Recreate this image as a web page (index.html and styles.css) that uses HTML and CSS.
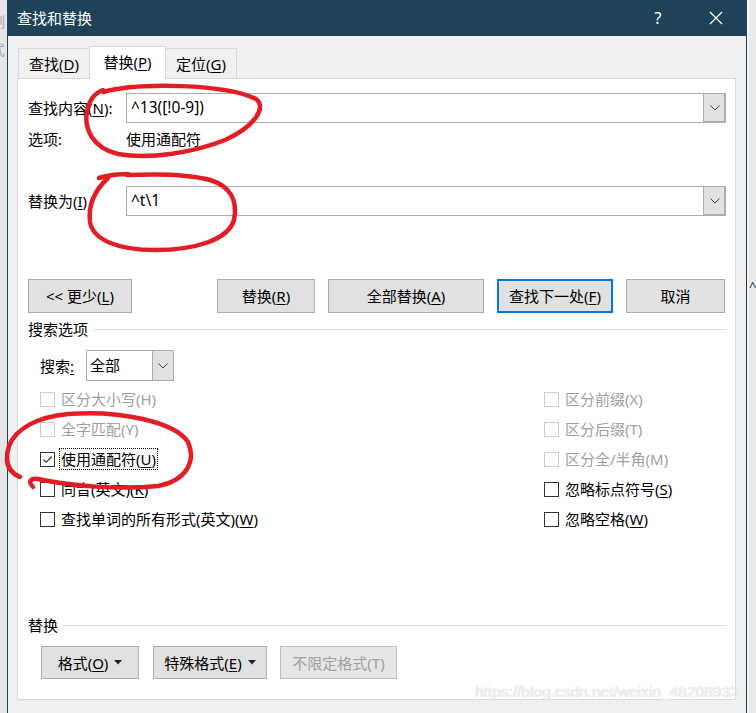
FILE: index.html
```html
<!DOCTYPE html>
<html lang="zh-CN">
<head>
<meta charset="utf-8">
<title>查找和替换</title>
<link rel="stylesheet" href="styles.css">
</head>
<body>
<div class="screen">
  <div class="left-strip"><span class="ls1">制</span><span class="ls2">式</span></div>
  <div class="dialog">
    <div class="titlebar">
      <span class="title">查找和替换</span>
      <span class="tb-btn help">?</span>
      <span class="tb-btn close"><svg width="14" height="14" viewBox="0 0 14 14"><path d="M1 1 L13 13 M13 1 L1 13" stroke="#fff" stroke-width="1.3" fill="none"/></svg></span>
    </div>
    <div class="client">
      <div class="tabs">
        <div class="tab">查找(<u>D</u>)</div>
        <div class="tab active">替换(<u>P</u>)</div>
        <div class="tab">定位(<u>G</u>)</div>
      </div>
      <div class="panel">
        <div class="field-row">
          <span class="field-label">查找内容(<u>N</u>):</span>
          <div class="combo">
            <span class="combo-text">^13([!0-9])</span>
            <span class="combo-btn"><svg width="10" height="6" viewBox="0 0 10 6"><path d="M0.5 0.5 L5 5 L9.5 0.5" stroke="#444" stroke-width="1" fill="none"/></svg></span>
          </div>
        </div>
        <div class="options-row">
          <span class="field-label">选项:</span>
          <span>使用通配符</span>
        </div>
        <div class="field-row replace-row">
          <span class="field-label">替换为(<u>I</u>)</span>
          <div class="combo">
            <span class="combo-text">^t\1</span>
            <span class="combo-btn"><svg width="10" height="6" viewBox="0 0 10 6"><path d="M0.5 0.5 L5 5 L9.5 0.5" stroke="#444" stroke-width="1" fill="none"/></svg></span>
          </div>
        </div>
        <div class="button-row">
          <span class="btn b-less">&lt;&lt; 更少(<u>L</u>)</span>
          <span class="btn b-replace">替换(<u>R</u>)</span>
          <span class="btn b-all">全部替换(<u>A</u>)</span>
          <span class="btn b-next default">查找下一处(<u>F</u>)</span>
          <span class="btn b-cancel">取消</span>
        </div>
        <div class="section-head"><span>搜索选项</span><span class="line"></span></div>
        <div class="search-row">
          <span class="search-label">搜索<u>:</u></span>
          <div class="select">
            <span class="select-text">全部</span>
            <span class="select-btn"><svg width="10" height="6" viewBox="0 0 10 6"><path d="M0.5 0.5 L5 5 L9.5 0.5" stroke="#444" stroke-width="1" fill="none"/></svg></span>
          </div>
        </div>
        <div class="checks">
          <div class="check disabled"><span class="box"></span><span>区分大小写(H)</span></div>
          <div class="check disabled"><span class="box"></span><span>区分前缀(X)</span></div>
          <div class="check disabled"><span class="box"></span><span>全字匹配(Y)</span></div>
          <div class="check disabled"><span class="box"></span><span>区分后缀(T)</span></div>
          <div class="check"><span class="box"><svg width="13" height="13" viewBox="0 0 13 13"><path d="M2.5 6.5 L5.2 9.2 L10.8 3.5" stroke="#3c3c3c" stroke-width="1.2" fill="none"/></svg></span><span class="focus">使用通配符(<u>U</u>)</span></div>
          <div class="check disabled"><span class="box"></span><span>区分全/半角(M)</span></div>
          <div class="check"><span class="box"></span><span>同音(英文)(<u>K</u>)</span></div>
          <div class="check"><span class="box"></span><span>忽略标点符号(<u>S</u>)</span></div>
          <div class="check"><span class="box"></span><span>查找单词的所有形式(英文)(<u>W</u>)</span></div>
          <div class="check"><span class="box"></span><span>忽略空格(<u>W</u>)</span></div>
        </div>
        <div class="section-head section-head2"><span>替换</span><span class="line"></span></div>
        <div class="bottom-buttons">
          <span class="btn b-format">格式(<u>O</u>)<svg class="tri" width="8" height="5" viewBox="0 0 8 5"><path d="M0 0 L8 0 L4 4.5 Z" fill="#222"/></svg></span>
          <span class="btn b-special">特殊格式(<u>E</u>)<svg class="tri" width="8" height="5" viewBox="0 0 8 5"><path d="M0 0 L8 0 L4 4.5 Z" fill="#222"/></svg></span>
          <span class="btn b-nofmt disabled">不限定格式(T)</span>
        </div>
      </div>
    </div>
  </div>
  <div class="right-strip"><span class="caret">^</span></div>

  <svg class="annot" width="756" height="713" viewBox="0 0 756 713">
    <g fill="none" stroke="#e21d25" stroke-width="4.5" stroke-linecap="round" stroke-linejoin="round">
      <path d="M103 92 C140 82, 225 84, 256 99 C268 108, 252 128, 225 140 C195 152, 150 160, 118 154 C92 148, 84 128, 87 112 C89 100, 95 93, 103 90"/>
      <path d="M99 178 C112 174, 128 174, 128 174 M108 178 C95 190, 88 205, 90 222 C93 240, 118 250, 155 250 C195 250, 228 240, 234 220 C238 200, 230 186, 210 180 C185 173, 150 174, 127 175"/>
      <path d="M33 487 C28 482, 30 478, 38 479 C70 486, 120 490, 158 486 C188 480, 196 460, 188 442 C175 422, 120 410, 68 414 C38 417, 16 428, 9 446 C4 462, 8 472, 20 477"/>
    </g>
  </svg>
  <div class="watermark">https://blog.csdn.net/weixin_48208932</div>
</div>
</body>
</html>
```
FILE: styles.css
```css
* { box-sizing: border-box; }
html, body { margin: 0; padding: 0; }
body {
  width: 756px;
  height: 713px;
  overflow: hidden;
  background: #f0f0f0;
  font-family: "Noto Sans", "Noto Sans CJK SC", sans-serif;
  font-size: 15px;
  color: #000;
}
u { text-decoration: underline; text-underline-offset: 2px; }

.screen {
  position: relative;
  display: flex;
  width: 756px;
  height: 713px;
}

.left-strip {
  width: 7px;
  background: #e6e6e6;
  overflow: hidden;
  display: flex;
  flex-direction: column;
  padding-top: 12px;
}
.left-strip span {
  color: #a8a8a8;
  font-size: 14px;
  line-height: 20px;
  margin-left: -9px;
}
.left-strip .ls2 { margin-top: 8px; }

.dialog {
  width: 740px;
  display: flex;
  flex-direction: column;
  border-left: 1px solid #1e4359;
  border-right: 1px solid #1e4359;
}

.titlebar {
  height: 36px;
  background: #1e4359;
  color: #fff;
  display: flex;
  align-items: center;
  padding-left: 9px;
  padding-right: 7px;
}
.title { flex: 1; font-size: 15px; line-height: 20px; }
.tb-btn {
  width: 46px;
  height: 36px;
  display: flex;
  align-items: center;
  justify-content: center;
}
.help { font-size: 16px; margin-right: 12px; font-family: "Noto Sans", sans-serif; }

.client {
  flex: 1;
  background: #f0f0f0;
  padding: 10px 10px 0 9px;
}

.tabs {
  display: flex;
  align-items: flex-end;
  height: 32px;
  padding-left: 1px;
}
.tab {
  width: 72px;
  height: 30px;
  border: 1px solid #d9d9d9;
  border-bottom: none;
  display: flex;
  align-items: center;
  justify-content: center;
  line-height: 20px;
  background: #f0f0f0;
}
.tab + .tab { margin-left: -1px; }
.tab.active {
  width: 77px;
  height: 33px;
  background: #fff;
  margin-bottom: -1px;
  position: relative;
  z-index: 1;
  padding-bottom: 2px;
}

.panel {
  height: 622px;
  background: #fff;
  border: 1px solid #d9d9d9;
  padding: 14px 9px 0 10px;
  display: flex;
  flex-direction: column;
}

.field-row {
  display: flex;
  align-items: center;
  height: 30px;
}
.field-label { width: 98px; flex: none; line-height: 20px; }
.combo {
  flex: 1;
  height: 30px;
  border: 1px solid #adadad;
  display: flex;
  background: #fff;
}
.combo-text {
  flex: 1;
  padding-left: 4px;
  font-size: 15.5px;
  line-height: 27px;
}
.combo-btn {
  width: 22px;
  background: #e1e1e1;
  border-left: 1px solid #adadad;
  box-shadow: inset -1px -1px 0 #adadad;
  display: flex;
  align-items: center;
  justify-content: center;
}

.options-row {
  display: flex;
  margin-top: 6px;
  line-height: 20px;
}
.replace-row { margin-top: 37px; }

.btn {
  display: flex;
  align-items: center;
  justify-content: center;
  background: #e1e1e1;
  border: 1px solid #adadad;
  line-height: 20px;
  flex: none;
}
.btn.default { border: 2px solid #0078d7; }
.btn.disabled { background: #e6e6e6; border-color: #bfbfbf; color: #a0a0a0; }

.button-row {
  display: flex;
  margin-top: 63px;
  height: 34px;
}
.b-less { width: 104px; }
.b-replace { width: 98px; margin-left: 85px; }
.b-all { width: 156px; margin-left: 13px; }
.b-next { width: 116px; margin-left: 13px; }
.b-cancel { width: 99px; margin-left: 13px; }

.section-head {
  display: flex;
  align-items: center;
  line-height: 20px;
  margin-top: 6px;
}
.section-head .line {
  flex: 1;
  height: 1px;
  background: #dcdcdc;
  margin-left: 5px;
}
.section-head2 { margin-top: 81px; }

.search-row {
  display: flex;
  align-items: center;
  margin-top: 11px;
  padding-left: 12px;
  height: 31px;
}
.search-label { width: 46px; line-height: 20px; }
.select {
  width: 88px;
  height: 31px;
  border: 1px solid #adadad;
  display: flex;
  background: #fff;
}
.select-text { flex: 1; padding-left: 3px; line-height: 28px; }
.select-btn {
  width: 21px;
  background: #e1e1e1;
  border-left: 1px solid #adadad;
  display: flex;
  align-items: center;
  justify-content: center;
}

.checks {
  display: grid;
  grid-template-columns: 504px auto;
  grid-auto-rows: 30px;
  margin-top: 3px;
  padding-left: 12px;
}
.check {
  display: flex;
  align-items: center;
  line-height: 20px;
}
.check .box {
  width: 15px;
  height: 15px;
  border: 1px solid #333;
  margin-right: 6px;
  background: #fff;
  display: flex;
  align-items: center;
  justify-content: center;
  flex: none;
}
.check.disabled { color: #a0a0a0; }
.check.disabled .box { border-color: #cccccc; }
.focus {
  border: 1px dotted #000;
  margin-left: -2px;
  padding: 0 1px;
  line-height: 20px;
}

.bottom-buttons {
  display: flex;
  margin-top: 11px;
  height: 33px;
}
.b-format { width: 98px; margin-left: 13px; }
.b-special { width: 114px; margin-left: 14px; }
.b-nofmt { width: 117px; margin-left: 13px; }
.tri { margin-left: 6px; }

.right-strip {
  width: 9px;
  background: #eaeaea;
  border-left: 2px solid #f6f6f6;
  overflow: hidden;
}
.caret {
  display: block;
  margin-top: 278px;
  margin-left: 0;
  font-size: 13px;
  line-height: 16px;
  color: #333;
}

.annot {
  position: absolute;
  left: 0;
  top: 0;
  pointer-events: none;
}
.watermark {
  position: absolute;
  left: 475px;
  top: 683px;
  font-family: "Liberation Sans", Arial, sans-serif;
  font-size: 15.5px;
  line-height: 18px;
  color: rgba(255, 255, 255, 0.85);
  text-shadow: 0 0 1px rgba(120, 120, 120, 0.6);
  white-space: nowrap;
  pointer-events: none;
}
```
